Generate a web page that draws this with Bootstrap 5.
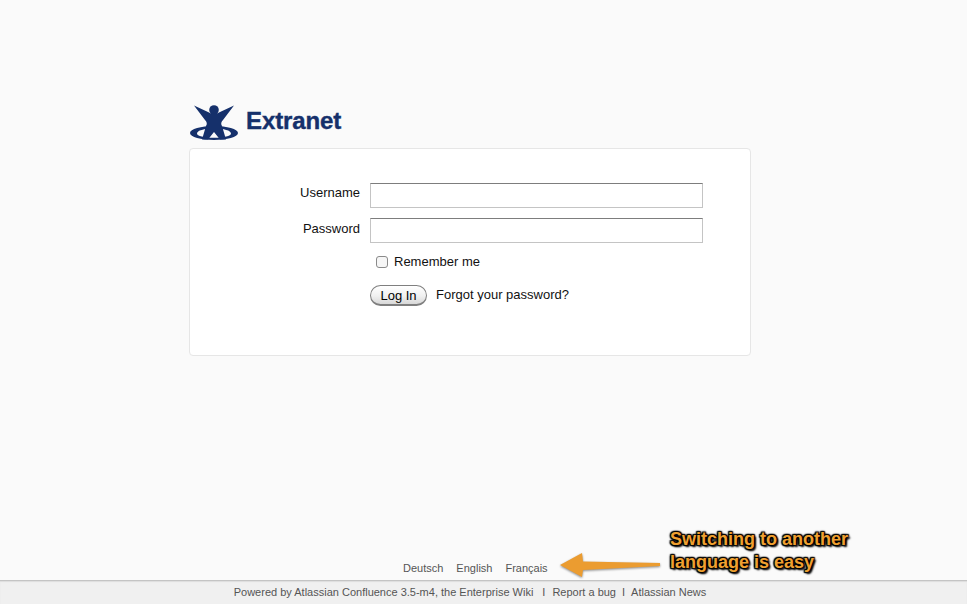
<!DOCTYPE html>
<html lang="en">
<head>
    <meta charset="UTF-8" />
    <title>Extranet - Log In</title>
    <meta name="viewport" content="width=device-width, initial-scale=1" />
    <link href="https://cdn.jsdelivr.net/npm/bootstrap@5.3.0/dist/css/bootstrap.min.css" rel="stylesheet" />
    <style>
        html, body { height: 100%; }
        body { background: #fafafa; font-family: "Liberation Sans", Arial, sans-serif; font-size: 13px; color: #111; overflow: hidden; }
        .page-wrap { height: 604px; }
        .login-area { width: 562px; margin-left: 189px; padding-top: 104px; flex: 1 1 auto; }
        .brand-row { height: 44px; gap: 6px; padding-left: 1px; }
        .brand-name { font-size: 24px; font-weight: 700; color: #15306b; line-height: 32px; margin-top: 1px; letter-spacing: -0.1px; -webkit-text-stroke: 0.4px #15306b; }
        .login-box { height: 208px; background: #fff; border: 1px solid #e6e6e6; border-radius: 4px; padding-top: 34px; }
        .field-row { height: 25px; margin-bottom: 10px; }
        .field-label { width: 180px; text-align: right; padding-right: 10px; line-height: 19px; }
        .pass-label { padding-top: 1px; }
        .field-input { width: 333px; height: 25px; border: 1px solid #c4c4c4; border-top-color: #7d7d7d; border-radius: 0; background: #fff; padding: 0 3px; outline: none; }
        .remember-row { margin-left: 186px; height: 19px; gap: 6px; margin-top: -1px; }
        .remember-row .form-check-input { width: 12px; height: 12px; margin: 0; border: 1px solid #8a8a8a; border-radius: 3px; float: none; background-color: #f6f6f6; }
        .remember-row label { font-size: 13px; }
        .submit-row { margin-left: 180px; margin-top: 14px; gap: 9px; }
        .login-btn { height: 21px; width: 57px; padding: 0; font-size: 13px; line-height: 17px; color: #000; border: 1px solid #7f7f7f; border-bottom-width: 2px; border-radius: 11px; background: linear-gradient(#fff, #f0f0f0 55%, #d8d8d8); }
        .forgot-link { color: #111; text-decoration: none; margin-bottom: 2px; }
        .lang-row { gap: 13px; margin-left: 403px; height: 24px; font-size: 11px; color: #555; line-height: 24px; }
        .lang-row a, .site-foot a { color: #555; text-decoration: none; }
        .site-foot { height: 24px; background: #f0f0f0; border-top: 1px solid #c4c4c4; box-shadow: inset 0 1px 1px #ddd; font-size: 11px; color: #555; line-height: 22px; padding-right: 27px; }
        .sep-first { margin: 0 7px 0 9px; }
        .sep-second { margin: 0 6px 0 6px; }
        .note-text { position: absolute; left: 670px; top: 528px; font-size: 18px; line-height: 23px; font-weight: 700; color: #f0a030; text-shadow: 0 0 2px #000, 0 0 2px #000, 1px 1px 2px #000, -1px -1px 1px #000, 1px -1px 1px #000, -1px 1px 1px #000, 2px 2px 2px #000, 0 0 3px #000; white-space: nowrap; }
        .note-arrow { position: absolute; left: 558px; top: 551px; filter: drop-shadow(0 1px 1px rgba(0,0,0,.45)); }
    </style>
</head>
<body>

<div class="page-wrap d-flex flex-column">
    <div class="login-area">
        <div class="brand-row d-flex align-items-start">
            <svg width="50" height="37" viewBox="0 0 50 37">
                <g fill="#15306b">
                    <path fill-rule="evenodd" d="M24 22 C37 22 48 25 48 29 C48 33 37 36 24 36 C11 36 0 33 0 29 C0 25 11 22 24 22 Z M24 24.500 C14 24.500 7 26.500 7 29.500 C7 32 14 33.800 24 33.800 C34 33.800 41 32 41 29.500 C41 26.500 34 24.500 24 24.500 Z"/>
                    <circle cx="24" cy="6" r="4.800"/>
                    <path d="M4 1.500 L18 8 Q24 12 30 8 L44 1.500 L33 16 Q30 19 32 22 L36 35.500 L30 35.500 L24 28 L18 35.500 L12 35.500 L16 22 Q18 19 15 16 Z"/>
                </g>
            </svg>
            <div class="brand-name">Extranet</div>
        </div>
        <form class="login-box">
            <div class="field-row d-flex">
                <label class="field-label" for="user">Username</label>
                <input class="field-input" id="user" type="text" />
            </div>
            <div class="field-row d-flex">
                <label class="field-label pass-label" for="pass">Password</label>
                <input class="field-input" id="pass" type="password" />
            </div>
            <div class="remember-row d-flex align-items-center">
                <input class="form-check-input" type="checkbox" id="rem" />
                <label for="rem">Remember me</label>
            </div>
            <div class="submit-row d-flex align-items-center">
                <button type="button" class="btn login-btn">Log In</button>
                <a href="#" class="forgot-link">Forgot your password?</a>
            </div>
        </form>
    </div>

    <div class="lang-row d-flex">
        <a href="#">Deutsch</a>
        <a href="#">English</a>
        <a href="#">Français</a>
    </div>
    <div class="site-foot d-flex justify-content-center">
        <span>Powered by <a href="#">Atlassian Confluence</a> 3.5-m4, the Enterprise Wiki</span>
        <span class="sep-first">I</span>
        <a href="#">Report a bug</a>
        <span class="sep-second">I</span>
        <a href="#">Atlassian News</a>
    </div>
</div>

<svg class="note-arrow" width="106" height="28" viewBox="0 0 106 28">
    <path d="M2 14 L24 2 L25 10.500 L102 12 L102 15 L25 19 L24 26 Z" fill="#eb9c30"/>
</svg>
<div class="note-text">Switching to another<br />language is easy</div>

<script src="https://cdn.jsdelivr.net/npm/bootstrap@5.3.0/dist/js/bootstrap.bundle.min.js"></script>
</body>
</html>
